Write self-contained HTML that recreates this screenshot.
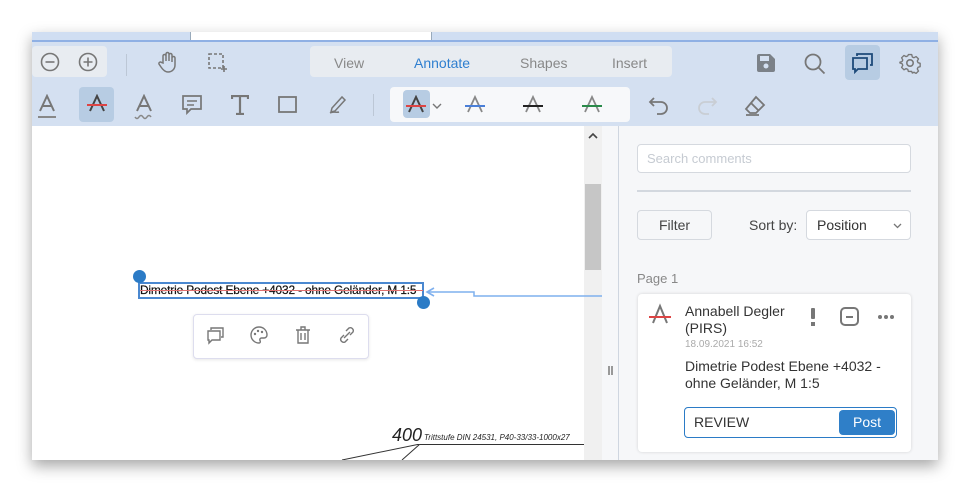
<!DOCTYPE html>
<html><head><meta charset="utf-8"><style>
*{box-sizing:border-box;margin:0;padding:0}
body{width:970px;height:492px;background:#fff;font-family:"Liberation Sans",sans-serif;position:relative;overflow:hidden}
.win{position:absolute;left:32px;top:32px;width:906px;height:428px;background:#fff;box-shadow:0 6px 14px rgba(0,0,0,.35);overflow:hidden}
.tabs{position:absolute;left:0;top:0;width:906px;height:10px;background:#d0def2;border-bottom:2px solid #8fb0e4}
.tab{position:absolute;left:158px;top:0;width:242px;height:8px;background:#fff;border-left:1px solid #9ab;border-right:1px solid #9ab}
.tb{position:absolute;left:0;top:10px;width:906px;height:84px;background:#d4e0f1}
.abs{position:absolute}
.grp{position:absolute;background:#e8ecf1;border-radius:4px}
.txt{font-size:14px;color:#888}
.doc{position:absolute;left:0;top:94px;width:552px;height:334px;background:#fff}
.sb{position:absolute;left:552px;top:94px;width:18px;height:334px;background:#f0f0f0}
.panel{position:absolute;left:586px;top:94px;width:320px;height:334px;background:#f6f7f9;border-left:1px solid #cfd6e0}
svg{position:absolute}
</style></head><body>
<div class="win">
<div class="tabs"><div class="tab"></div></div>
<div class="tb">
 <div class="grp" style="left:0;top:4px;width:75px;height:31px"></div>
 <svg style="left:8px;top:10px" width="20" height="20" viewBox="0 0 20 20"><circle cx="10" cy="10" r="8.5" fill="none" stroke="#777" stroke-width="1.6"/><path d="M5.5 10h9" stroke="#777" stroke-width="1.6"/></svg>
 <svg style="left:46px;top:10px" width="20" height="20" viewBox="0 0 20 20"><circle cx="10" cy="10" r="8.5" fill="none" stroke="#777" stroke-width="1.6"/><path d="M5.5 10h9M10 5.5v9" stroke="#777" stroke-width="1.6"/></svg>
 <div class="abs" style="left:94px;top:12px;width:1px;height:22px;background:#bcc7d6"></div>
 <svg style="left:126px;top:9px" width="20" height="22" viewBox="0 0 20 22"><path d="M5 12V5a1.5 1.5 0 013 0v5V3a1.5 1.5 0 013 0v7V4a1.5 1.5 0 013 0v7V7a1.5 1.5 0 013 0v7c0 4-3 7-7 7-3 0-5-2-7-5l-2-3a1.5 1.5 0 012.5-1.5z" fill="none" stroke="#777" stroke-width="1.5"/></svg>
 <svg style="left:176px;top:11px" width="20" height="20" viewBox="0 0 20 20"><rect x="1" y="1" width="14" height="14" fill="none" stroke="#777" stroke-width="1.6" stroke-dasharray="3 2"/><path d="M16 13v6M13 16h6" stroke="#777" stroke-width="1.6"/></svg>
 <div class="grp" style="left:278px;top:4px;width:362px;height:31px"></div>
 <div class="abs txt" style="left:302px;top:13px">View</div>
 <div class="abs txt" style="left:382px;top:13px;color:#2f7fd0">Annotate</div>
 <div class="abs txt" style="left:488px;top:13px">Shapes</div>
 <div class="abs txt" style="left:580px;top:13px">Insert</div>
 <svg style="left:724px;top:11px" width="20" height="20" viewBox="0 0 20 20"><path d="M1 3a2 2 0 012-2h11l5 5v11a2 2 0 01-2 2H3a2 2 0 01-2-2z" fill="#7b8188"/><rect x="4" y="3" width="9" height="5" fill="#d4e0f1"/><circle cx="10" cy="13" r="2.5" fill="#d4e0f1"/></svg>
 <svg style="left:772px;top:11px" width="22" height="22" viewBox="0 0 22 22"><circle cx="9" cy="9" r="7.5" fill="none" stroke="#777" stroke-width="1.8"/><path d="M14.5 14.5l6 6" stroke="#777" stroke-width="1.8"/></svg>
 <div class="grp" style="left:813px;top:3px;width:35px;height:35px;background:#b7cce3"></div>
 <svg style="left:820px;top:10px" width="22" height="22" viewBox="0 0 22 22"><path d="M5 4V2h15v11h-2M1 6h14v11H6l-3 3v-3H1z" fill="none" stroke="#1d4a79" stroke-width="1.8"/></svg>
 <svg style="left:867px;top:10px" width="22" height="22" viewBox="0 0 24 24"><circle cx="12" cy="12" r="3.5" fill="none" stroke="#777" stroke-width="1.7"/><path d="M10 2h4l.7 2.8 2 .9 2.5-1.4 2.8 2.8-1.4 2.5.9 2 2.5.7v4l-2.5.7-.9 2 1.4 2.5-2.8 2.8-2.5-1.4-2 .9L14 22h-4l-.7-2.5-2-.9-2.5 1.4L2 17.2l1.4-2.5-.9-2L0 12V11l2.5-.7.9-2L2 5.8 4.8 3l2.5 1.4 2-.9z" fill="none" stroke="#777" stroke-width="1.6" stroke-linejoin="round" transform="translate(1 1) scale(.92)"/></svg>
 <!-- row 2 -->
 <div class="abs" style="left:47px;top:45px;width:35px;height:35px;background:#b7cce3;border-radius:4px"></div>
 <svg style="left:5px;top:52px" width="20" height="26" viewBox="0 0 20 26"><path d="M3 17L10 2l7 15M6 12h8" fill="none" stroke="#777" stroke-width="2"/><path d="M1 23h18" stroke="#888" stroke-width="2"/></svg>
 <svg style="left:54px;top:52px" width="22" height="20" viewBox="0 0 22 20"><path d="M4 17L11 2l7 15" fill="none" stroke="#444" stroke-width="2"/><path d="M1 11h20" stroke="#d44" stroke-width="2"/></svg>
 <svg style="left:102px;top:52px" width="20" height="28" viewBox="0 0 20 28"><path d="M3 17L10 2l7 15M6 12h8" fill="none" stroke="#777" stroke-width="2"/><path d="M1 23q2 3 4 0t4 0t4 0t4 0" fill="none" stroke="#888" stroke-width="1.5"/></svg>
 <svg style="left:150px;top:53px" width="20" height="20" viewBox="0 0 20 20"><path d="M1 1h18v13H9l-4 4v-4H1z" fill="none" stroke="#777" stroke-width="1.7"/><path d="M5 6h10M5 10h7" stroke="#777" stroke-width="1.5"/></svg>
 <svg style="left:199px;top:53px" width="18" height="20" viewBox="0 0 18 20"><path d="M1 4V1h16v3M9 1v18M5 19h8" fill="none" stroke="#777" stroke-width="2.2"/></svg>
 <svg style="left:246px;top:54px" width="20" height="18" viewBox="0 0 20 18"><rect x="1" y="1" width="17" height="15" fill="none" stroke="#777" stroke-width="1.8"/></svg>
 <svg style="left:296px;top:52px" width="20" height="20" viewBox="0 0 20 20"><path d="M4 14l10-11 3 3-10 11-4 1zM2 19c3-2 6 0 9-1" fill="none" stroke="#777" stroke-width="1.5"/></svg>
 <div class="abs" style="left:341px;top:52px;width:1px;height:22px;background:#bcc7d6"></div>
 <div class="abs" style="left:358px;top:45px;width:240px;height:35px;background:#f7f8fa;border-radius:4px"></div>
 <div class="abs" style="left:371px;top:48px;width:27px;height:28px;background:#b7cce3;border-radius:4px"></div>
 <svg style="left:373px;top:53px" width="22" height="20" viewBox="0 0 22 20"><path d="M4 17L11 2l7 15" fill="none" stroke="#444" stroke-width="2"/><path d="M1 11h20" stroke="#d44" stroke-width="2"/></svg>
 <svg style="left:400px;top:60px" width="10" height="8" viewBox="0 0 10 8"><path d="M1 2l4 4 4-4" fill="none" stroke="#777" stroke-width="1.4"/></svg>
 <svg style="left:432px;top:53px" width="22" height="20" viewBox="0 0 22 20"><path d="M4 17L11 2l7 15" fill="none" stroke="#888" stroke-width="1.8"/><path d="M1 11h20" stroke="#4a7fd8" stroke-width="2"/></svg>
 <svg style="left:490px;top:53px" width="22" height="20" viewBox="0 0 22 20"><path d="M4 17L11 2l7 15" fill="none" stroke="#888" stroke-width="1.8"/><path d="M1 11h20" stroke="#222" stroke-width="2"/></svg>
 <svg style="left:549px;top:53px" width="22" height="20" viewBox="0 0 22 20"><path d="M4 17L11 2l7 15" fill="none" stroke="#888" stroke-width="1.8"/><path d="M1 11h20" stroke="#2a8a4a" stroke-width="2"/></svg>
 <svg style="left:616px;top:54px" width="22" height="20" viewBox="0 0 22 20"><path d="M6 2L2 6l4 4M2 6h11a6 6 0 010 12H9" fill="none" stroke="#777" stroke-width="1.8"/></svg>
 <svg style="left:664px;top:54px" width="22" height="20" viewBox="0 0 22 20"><path d="M16 2l4 4-4 4M20 6H9a6 6 0 000 12h4" fill="none" stroke="#c9ced4" stroke-width="1.8"/></svg>
 <svg style="left:712px;top:53px" width="22" height="22" viewBox="0 0 22 22"><path d="M12 2l8 8-8 8H6l-4-4zM7 8l8 8M2 20h13" fill="none" stroke="#777" stroke-width="1.8"/></svg>
</div>
<div class="doc">
 <div class="abs" style="left:106px;top:156px;width:286px;height:17px;border:2px solid #4a88d0"></div>
 <div class="abs" style="left:108px;top:157px;font-size:11.9px;color:#111;white-space:nowrap;letter-spacing:-.15px;-webkit-text-stroke:.2px #111">Dimetrie Podest Ebene +4032 - ohne Geländer, M 1:5</div>
 <div class="abs" style="left:108px;top:164px;width:283px;height:1px;background:#e07070"></div>
 <div class="abs" style="left:101px;top:144px;width:13px;height:13px;border-radius:50%;background:#2b7bc6"></div>
 <div class="abs" style="left:385px;top:170px;width:13px;height:13px;border-radius:50%;background:#2b7bc6"></div>
 <div class="abs" style="left:161px;top:188px;width:176px;height:45px;border:1px solid #dde;border-radius:4px;background:#fff;box-shadow:0 1px 3px rgba(0,0,0,.1)"></div>
 <svg style="left:175px;top:201px" width="18" height="18" viewBox="0 0 18 18"><path d="M4 3V1h12v9h-2M1 4h12v9H5l-3 3v-3H1z" fill="none" stroke="#777" stroke-width="1.4"/></svg>
 <svg style="left:218px;top:200px" width="18" height="18" viewBox="0 0 18 18"><path d="M9 1a8 8 0 100 16c1.5 0 1.5-1.5 1-2.5s0-2.5 1.5-2.5H14a3 3 0 003-3C17 4.5 13.5 1 9 1z" fill="none" stroke="#777" stroke-width="1.4"/><circle cx="5" cy="8" r="1.2" fill="#777"/><circle cx="8" cy="5" r="1.2" fill="#777"/><circle cx="12" cy="6" r="1.2" fill="#777"/></svg>
 <svg style="left:263px;top:200px" width="16" height="18" viewBox="0 0 16 18"><path d="M1 4h14M6 4V1h4v3M3 4v13h10V4M6 7v7M10 7v7" fill="none" stroke="#777" stroke-width="1.4"/></svg>
 <svg style="left:306px;top:200px" width="18" height="18" viewBox="0 0 18 18"><path d="M8 5l3-3a3 3 0 014 4l-3 3M10 13l-3 3a3 3 0 01-4-4l3-3M6 12l6-6" fill="none" stroke="#777" stroke-width="1.4"/></svg>
 <div class="abs" style="left:360px;top:299px;font-size:18px;font-style:italic;color:#222">400</div>
 <div class="abs" style="left:392px;top:307px;font-size:8px;font-style:italic;color:#222;white-space:nowrap">Trittstufe DIN 24531, P40-33/33-1000x27</div>
 <div class="abs" style="left:388px;top:318px;width:170px;height:1px;background:#333"></div>
 <svg style="left:290px;top:318px" width="100" height="16"><path d="M98 0L20 16M98 0L80 16" stroke="#333" stroke-width="1"/></svg>
</div>
<div class="sb"><svg style="left:4px;top:6px" width="10" height="7" viewBox="0 0 10 7"><path d="M1 6l4-4 4 4" fill="none" stroke="#444" stroke-width="1.6"/></svg><div class="abs" style="left:1px;top:58px;width:16px;height:86px;background:#c6c6c6"></div></div>
<svg style="left:392px;top:253px" width="212" height="14"><path d="M210 11H50V7H4" fill="none" stroke="#7fb0ee" stroke-width="1.5"/><path d="M10 3L3 7l7 4" fill="none" stroke="#7fb0ee" stroke-width="1.6"/></svg>
<div class="abs" style="left:570px;top:94px;width:16px;height:334px;background:#f6f7f9"></div>
<div class="abs" style="left:576px;top:334px;width:2px;height:9px;background:#999"></div><div class="abs" style="left:579px;top:334px;width:2px;height:9px;background:#999"></div>
<div class="panel">
 <div class="abs" style="left:18px;top:18px;width:274px;height:29px;border:1px solid #d5d9df;border-radius:4px;background:#fff;font-size:13px;color:#c6cbd2;padding:6px 9px">Search comments</div>
 <div class="abs" style="left:18px;top:64px;width:274px;height:2px;background:#d3d8df"></div>
 <div class="abs" style="left:18px;top:84px;width:75px;height:30px;border:1px solid #d5d9df;border-radius:4px;background:#f6f7f9;font-size:14px;color:#444;text-align:center;line-height:28px">Filter</div>
 <div class="abs" style="left:130px;top:91px;font-size:14px;color:#444">Sort by:</div>
 <div class="abs" style="left:187px;top:84px;width:105px;height:30px;border:1px solid #d5d9df;border-radius:4px;background:#fff;font-size:14px;color:#333;padding:6px 10px">Position<svg style="right:8px;top:12px" width="9" height="6" viewBox="0 0 9 6"><path d="M1 1l3.5 3.5L8 1" fill="none" stroke="#777" stroke-width="1.3"/></svg></div>
 <div class="abs" style="left:18px;top:145px;font-size:13px;color:#888">Page 1</div>
 <div class="abs" style="left:19px;top:168px;width:273px;height:158px;background:#fff;border-radius:4px;box-shadow:0 0 3px rgba(0,0,0,.15)">
  <svg style="left:10px;top:9px" width="24" height="22" viewBox="0 0 24 22"><path d="M5 20L12 3l7 17" fill="none" stroke="#777" stroke-width="2"/><path d="M1 14h22" stroke="#d44" stroke-width="2"/></svg>
  <div class="abs" style="left:47px;top:9px;font-size:14px;color:#333;line-height:17px">Annabell Degler<br>(PIRS)</div>
  <div class="abs" style="left:47px;top:45px;font-size:10px;color:#aaa">18.09.2021 16:52</div>
  <div class="abs" style="left:173px;top:14px;width:4px;height:11px;background:#777;border-radius:1px"></div><div class="abs" style="left:173px;top:28px;width:4px;height:4px;background:#777"></div>
  <div class="abs" style="left:202px;top:13px;width:19px;height:19px;border:2px solid #777;border-radius:5px"><div style="position:absolute;left:4px;top:6.5px;width:7px;height:2px;background:#777"></div></div>
  <div class="abs" style="left:240px;top:21px;width:4px;height:4px;border-radius:50%;background:#777;box-shadow:6px 0 #777,12px 0 #777"></div>
  <div class="abs" style="left:47px;top:64px;font-size:14px;color:#333;line-height:17px">Dimetrie Podest Ebene +4032 -<br>ohne Geländer, M 1:5</div>
  <div class="abs" style="left:46px;top:113px;width:213px;height:31px;border:1px solid #2b7bc6;border-radius:4px;font-size:14px;color:#333;padding:6px 9px">REVIEW</div>
  <div class="abs" style="left:201px;top:116px;width:56px;height:25px;background:#2f7fc8;border-radius:4px;color:#fff;font-size:14px;text-align:center;line-height:25px">Post</div>
 </div>
</div>
</div>
</body></html>
